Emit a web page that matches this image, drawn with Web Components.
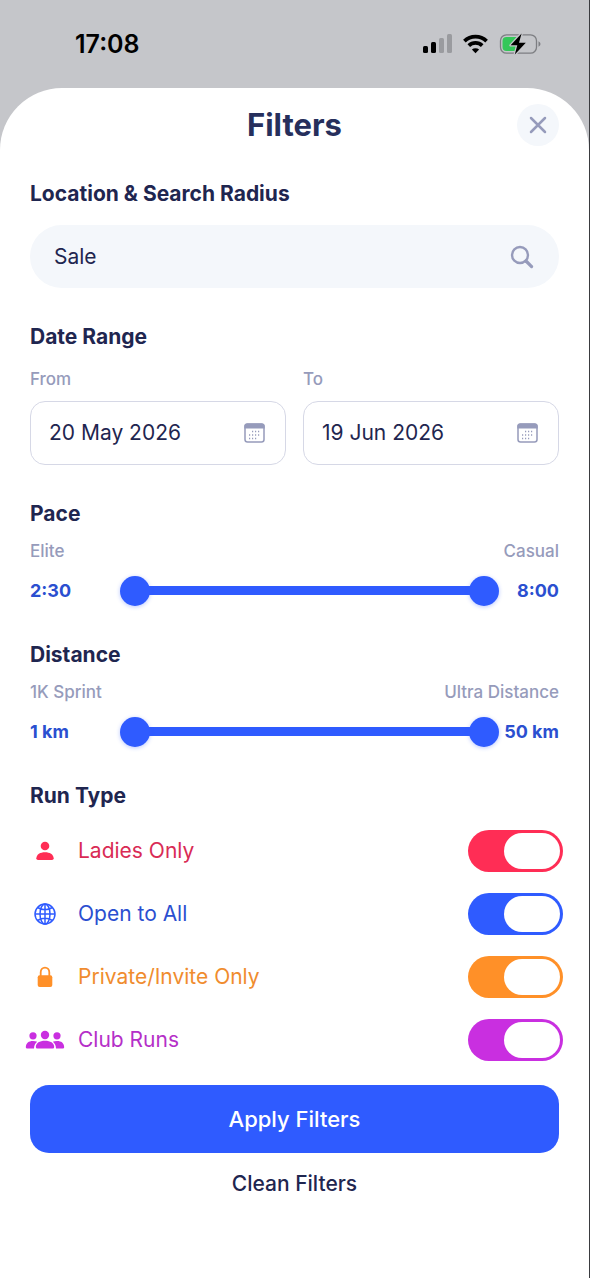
<!DOCTYPE html>
<html lang="en">
<head>
<meta charset="utf-8">
<meta name="viewport" content="width=device-width, initial-scale=1">
<title>Filters</title>
<style>
  html { height: 100%; }
  body {
    margin: 0; min-height: 100%; box-sizing: border-box;
    display: flex; flex-direction: column;
    border-right: 1px solid #3a3b3f;
    background: #c5c6ca;
    font-family: Inter, "Liberation Sans", sans-serif;
    --ink: #1f2650; --muted: #969bbb; --blue: #2f5bff; --field: #f4f7fb;
  }
</style>
</head>
<body>
<status-bar>17:08</status-bar>
<filter-sheet>
  <span slot="title">Filters</span>
  <filter-section>
    <span slot="heading">Location &amp; Search Radius</span>
    <search-field label="Location" value="Sale"></search-field>
  </filter-section>
  <filter-section>
    <span slot="heading">Date Range</span>
    <date-range>
      <date-field value="20 May 2026">From</date-field>
      <date-field value="19 Jun 2026">To</date-field>
    </date-range>
  </filter-section>
  <filter-section>
    <span slot="heading">Pace</span>
    <range-slider name="Pace" low="2:30" high="8:00"><span slot="min">Elite</span><span slot="max">Casual</span></range-slider>
  </filter-section>
  <filter-section>
    <span slot="heading">Distance</span>
    <range-slider name="Distance" low="1 km" high="50 km"><span slot="min">1K Sprint</span><span slot="max">Ultra Distance</span></range-slider>
  </filter-section>
  <filter-section>
    <span slot="heading">Run Type</span>
    <toggle-list>
      <toggle-row icon="person" color="#ff2d55" text="#d92b55">Ladies Only</toggle-row>
      <toggle-row icon="globe" color="#2f5bff" text="#2b4fd0">Open to All</toggle-row>
      <toggle-row icon="lock" color="#ff9028" text="#f08c2e">Private/Invite Only</toggle-row>
      <toggle-row icon="group" color="#c92fe0" text="#b52fc8">Club Runs</toggle-row>
    </toggle-list>
  </filter-section>
  <action-button slot="actions" variant="primary">Apply Filters</action-button>
  <action-button slot="actions" variant="plain">Clean Filters</action-button>
</filter-sheet>

<script>
const define = (name, render) => customElements.define(name, class extends HTMLElement {
  constructor() {
    super();
    this.attachShadow({ mode: 'open' });
  }
  connectedCallback() {
    const t = document.createElement('template');
    t.innerHTML = '<style>*{box-sizing:border-box}:host{box-sizing:border-box;display:block}</style>' + render(this);
    this.shadowRoot.replaceChildren(t.content.cloneNode(true));
  }
});

define('status-bar', () => `
  <style>
    :host { display: flex; justify-content: space-between; align-items: center; height: 88px; padding: 0 48px 0 75px;
      color: #000; font-size: 25px; font-weight: 600; line-height: 32px; }
    .icons { display: flex; align-items: center; gap: 11px; }
    svg { display: block; }
  </style>
  <span><slot></slot></span>
  <div class="icons">
    <svg width="30" height="20" viewBox="0 0 30 20" role="img" aria-label="Signal">
      <rect x="1" y="12" width="5" height="7" rx="1.5"/><rect x="9" y="8" width="5" height="11" rx="1.5"/>
      <rect x="17" y="4" width="5" height="15" rx="1.5" fill="#9a9b9f"/><rect x="25" y="0" width="5" height="19" rx="1.5" fill="#9a9b9f"/>
    </svg>
    <svg width="25" height="20" viewBox="0 0 25 20" fill="none" stroke="#000" stroke-width="3.7" role="img" aria-label="Wi-Fi">
      <path d="M1.4 7.1a15.8 15.8 0 0 1 22.2 0"/><path d="M5.8 11.6a9.6 9.6 0 0 1 13.4 0"/>
      <path d="M12.5 19.2 8.9 15.6a5.2 5.2 0 0 1 7.2 0z" fill="#000" stroke="none"/>
    </svg>
    <svg width="42" height="24" viewBox="0 0 42 24" role="img" aria-label="Battery charging">
      <rect x="1.5" y="2.8" width="36" height="18.4" rx="6" fill="none" stroke="#7d7e82" stroke-width="1.3"/>
      <path d="M7.500 5h11v14h-11a4 4 0 0 1-4-4V9a4 4 0 0 1 4-4z" fill="#34c759"/>
      <path d="M39.500 9.2q2 1 2 2.8t-2 2.8z" fill="#7d7e82"/>
      <path d="M22.6 1.4 11.6 13.3h6.700l-2.500 9.300L26.800 10.700H20z" fill="#000" stroke="#c5c6ca" stroke-width="2.6" stroke-linejoin="round" paint-order="stroke"/>
    </svg>
  </div>`);

define('filter-sheet', () => `
  <style>
    :host { flex: 1; padding: 16px 30px 24px; background: #fff; border-radius: 62px 62px 0 0; }
    header { display: grid; grid-template-columns: 42px 1fr 42px; align-items: center; margin-bottom: 34px; }
    h1 { grid-column: 2; margin: 0; text-align: center; font-size: 31px; line-height: 40px; font-weight: 700; color: #262f5c; }
    button { display: grid; place-items: center; width: 42px; height: 42px; padding: 0; border: 0; border-radius: 50%;
      background: var(--field); cursor: pointer; }
    main { display: flex; flex-direction: column; gap: 35px; }
    footer { display: flex; flex-direction: column; gap: 16px; margin-top: 24px; }
  </style>
  <header>
    <h1><slot name="title"></slot></h1>
    <button type="button" aria-label="Close">
      <svg width="18" height="18" viewBox="0 0 18 18" stroke="#969bbb" stroke-width="2.5" stroke-linecap="round"><path d="M2 2l14 14M16 2 2 16"/></svg>
    </button>
  </header>
  <main><slot></slot></main>
  <footer><slot name="actions"></slot></footer>`);

define('filter-section', () => `
  <style>
    h2 { margin: 0; font-size: 21px; line-height: 28px; font-weight: 700; color: var(--ink); }
  </style>
  <section><h2><slot name="heading"></slot></h2><slot></slot></section>`);

define('search-field', el => `
  <style>
    :host { margin-top: 17px; }
    .box { display: flex; align-items: center; height: 63px; padding: 0 25px 0 24px; border-radius: 32px; background: var(--field); }
    input { flex: 1; min-width: 0; padding: 0; border: 0; outline: 0; background: none; font: inherit; font-size: 21px; line-height: 28px; color: var(--ink); }
    svg { display: block; }
  </style>
  <div class="box">
    <input type="text" aria-label="${el.getAttribute('label')}" value="${el.getAttribute('value')}">
    <svg width="24" height="24" viewBox="0 0 24 24" fill="none" stroke="#969bbb" aria-hidden="true">
      <circle cx="10" cy="10" r="8" stroke-width="2.4"/><path d="M16 16l5.600 5.600" stroke-width="3.2" stroke-linecap="round"/>
    </svg>
  </div>`);

define('date-range', () => `
  <style>:host { display: grid; grid-template-columns: 1fr 1fr; gap: 17px; margin-top: 18px; }</style>
  <slot></slot>`);

define('date-field', el => `
  <style>
    label { display: block; margin-bottom: 12px; font-size: 17px; line-height: 20px; font-weight: 500; color: var(--muted); }
    .box { display: flex; align-items: center; height: 64px; padding: 0 20px 0 18px; border: 1px solid #d6d8e6; border-radius: 15px; }
    input { flex: 1; min-width: 0; width: 0; padding: 0; border: 0; outline: 0; background: none; font: inherit; font-size: 21px; line-height: 28px; color: var(--ink); }
    svg { display: block; }
  </style>
  <label for="date"><slot></slot></label>
  <div class="box">
    <input id="date" type="text" value="${el.getAttribute('value')}">
    <svg width="21" height="20" viewBox="0 0 21 20" aria-hidden="true">
      <rect x="1" y="1" width="19" height="18" rx="2.5" fill="none" stroke="#969bbb" stroke-width="1.5"/>
      <path d="M.3 5.500V3.400A3 3 0 0 1 3.300.4h14.400a3 3 0 0 1 3 3v2.100z" fill="#969bbb"/>
      <path d="M8 8.500h9M5 12h12M5 15.500h9" stroke="#969bbb" stroke-width="1.400" stroke-dasharray="1.200 1.800"/>
    </svg>
  </div>`);

define('range-slider', el => {
  const name = el.getAttribute('name'), low = el.getAttribute('low'), high = el.getAttribute('high');
  return `
  <style>
    :host { margin-top: 13px; }
    .ends { display: flex; justify-content: space-between; margin-bottom: 14px; font-size: 17px; line-height: 20px; font-weight: 500; color: var(--muted); }
    .row { display: grid; grid-template-columns: 90px 1fr 60px; align-items: center; height: 31px; font-size: 18px; line-height: 24px; font-weight: 700; color: #2b4fd0; }
    output:last-child { text-align: right; }
    .slider { display: grid; align-items: center; height: 30px; }
    .slider > * { grid-area: 1 / 1; }
    .track { height: 9px; margin: 0 15px; background: var(--blue); }
    input { appearance: none; width: 100%; height: 30px; margin: 0; background: none; pointer-events: none; }
    input::-webkit-slider-thumb { appearance: none; width: 30px; height: 30px; border: 0; border-radius: 50%;
      background: var(--blue); box-shadow: 0 1px 4px #2f5bff55; pointer-events: auto; }
  </style>
  <div class="ends"><slot name="min"></slot><slot name="max"></slot></div>
  <div class="row">
    <output>${low}</output>
    <div class="slider">
      <div class="track"></div>
      <input type="range" min="0" max="100" value="0" aria-label="${name} minimum" aria-valuetext="${low}">
      <input type="range" min="0" max="100" value="100" aria-label="${name} maximum" aria-valuetext="${high}">
    </div>
    <output>${high}</output>
  </div>`;
});

define('toggle-list', () => `
  <style>:host { display: flex; flex-direction: column; gap: 21px; margin-top: 20px; }</style>
  <slot></slot>`);

const icons = {
  person: '<svg width="18" height="20" viewBox="0 0 18 20"><circle cx="9" cy="5" r="4.3"/><path d="M.3 17.3C.6 13.2 4.2 11.2 9 11.2s8.4 2 8.7 6.1q0 1.700-1.700 1.700H2Q.3 19 .3 17.300z"/></svg>',
  globe: '<svg width="22" height="22" viewBox="0 0 22 22" fill="none" stroke="currentColor" stroke-width="1.500"><circle cx="11" cy="11" r="10"/><ellipse cx="11" cy="11" rx="5" ry="10"/><path d="M11 1v20M1 11h20M3.500 4.500Q11 9 18.500 4.500M3.500 17.500Q11 13 18.500 17.500"/></svg>',
  lock: '<svg width="16" height="22" viewBox="0 0 16 22"><path d="M3.700 10V6.300a4.300 4.700 0 0 1 8.600 0V10" fill="none" stroke="currentColor" stroke-width="1.800"/><rect x=".7" y="9.300" width="14.600" height="11.700" rx="2"/></svg>',
  group: '<svg width="40" height="20" viewBox="0 0 40 20"><circle cx="8" cy="5.800" r="3.600"/><circle cx="32" cy="5.800" r="3.600"/><path d="M.8 17.200C1 13 3.600 11 8 11q2.400 0 4.200.8-3 2.200-3.200 6.700H2.200Q.8 18.500.8 17.200zM39.200 17.200C39 13 36.400 11 32 11q-2.400 0-4.200.8 3 2.200 3.200 6.700h6.800q1.400 0 1.400-1.300z"/><circle cx="20" cy="5" r="4.200"/><path d="M10.800 17c.2-4 3.800-6.200 9.200-6.200s9 2.200 9.200 6.200q0 1.500-1.500 1.500H12.300q-1.500 0-1.500-1.500z"/></svg>'
};

define('toggle-row', el => `
  <style>
    label { display: grid; grid-template-columns: 30px 1fr 95px; align-items: center; column-gap: 18px;
      height: 42px; margin-right: -4px; font-size: 21px; line-height: 28px; font-weight: 400; color: ${el.getAttribute('text')}; cursor: pointer; }
    .icon { display: flex; justify-content: center; color: ${el.getAttribute('color')}; }
    svg { display: block; flex: none; fill: currentColor; }
    svg[fill="none"] { fill: none; }
    input { appearance: none; display: flex; justify-content: flex-start; width: 95px; height: 42px; margin: 0; padding: 3px;
      border-radius: 21px; background: #d6d8e6; cursor: pointer; }
    input::before { content: ""; width: 56px; border-radius: 18px; background: #fff; }
    input:checked { justify-content: flex-end; background: ${el.getAttribute('color')}; }
  </style>
  <label><span class="icon" aria-hidden="true">${icons[el.getAttribute('icon')]}</span><slot></slot><input type="checkbox" role="switch" checked></label>`);

define('action-button', el => `
  <style>
    button { display: block; width: 100%; border: 0; padding: 0; font: inherit; font-size: 22px; line-height: 30px; font-weight: 500; cursor: pointer; }
    .primary { height: 68px; border-radius: 19px; background: var(--blue); color: #fff; }
    .plain { background: none; color: var(--ink); font-size: 21px; }
  </style>
  <button type="button" class="${el.getAttribute('variant')}"><slot></slot></button>`);
</script>
</body>
</html>
